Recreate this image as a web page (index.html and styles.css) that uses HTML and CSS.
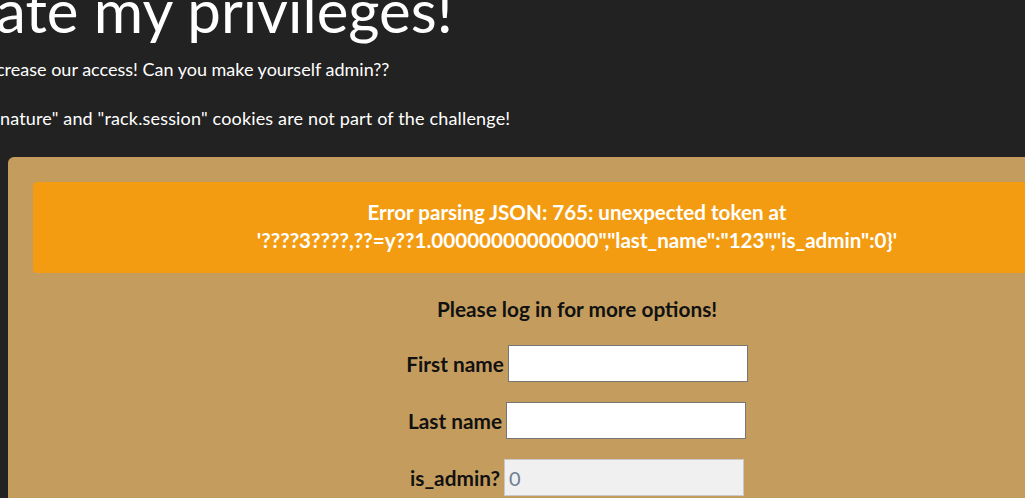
FILE: index.html
```html
<!DOCTYPE html>
<html lang="en">
<head>
<meta charset="utf-8">
<title>Escalate my privileges!</title>
<link rel="stylesheet" href="styles.css">
</head>
<body>
<div class="intro">
  <h1 class="title">ate my privileges!</h1>
  <p class="lead lead-one">crease our access! Can you make yourself admin??</p>
  <p class="lead lead-two">nature" and "rack.session" cookies are not part of the challenge!</p>
</div>
<div class="panel">
  <div class="alert">Error parsing JSON: 765: unexpected token at<br>'????3????,??=y??1.00000000000000","last_name":"123","is_admin":0}'</div>
  <p class="notice">Please log in for more options!</p>
  <form class="login">
    <div class="row"><label class="label" for="first">First name</label><input class="field" id="first" type="text"></div>
    <div class="row"><label class="label" for="last">Last name</label><input class="field" id="last" type="text"></div>
    <div class="row"><label class="label" for="admin">is_admin?</label><input class="field field-disabled" id="admin" type="text" value="0" disabled></div>
  </form>
</div>
</body>
</html>
```
FILE: styles.css
```css
html, body {
  margin: 0;
  padding: 0;
}
body {
  background: #222222;
  color: #ffffff;
  font-family: Lato, "Open Sans", sans-serif;
  overflow: hidden;
  height: 498px;
}
.intro {
  margin-top: -23px;
}
.title {
  font-weight: 400;
  font-size: 60px;
  line-height: 66px;
  margin: 0 0 13px -4px;
  white-space: nowrap;
}
.lead {
  font-size: 18px;
  line-height: 27px;
  margin: 0 0 22px 0;
  white-space: nowrap;
}
.lead-one {
  margin-left: -4px;
}
.lead-two {
  margin-bottom: 0;
  letter-spacing: 0.16px;
}
.panel {
  margin: 25px 0 0 8px;
  width: 1088px;
  padding: 25px;
  background: #c49d5e;
  border-radius: 6px;
  color: #111111;
}
.alert {
  background: #f39c12;
  color: #ffffff;
  border-radius: 4px;
  padding: 16px 15px 19px;
  font-size: 20.6px;
  line-height: 28px;
  font-weight: 700;
  text-align: center;
}
.notice {
  margin: 22px 0 22px;
  font-size: 20.8px;
  line-height: 28px;
  font-weight: 700;
  text-align: center;
}
.login {
  display: flex;
  flex-direction: column;
  gap: 20px;
}
.row {
  display: flex;
  justify-content: center;
  align-items: center;
  gap: 4px;
}
.label {
  font-size: 20.8px;
  line-height: 28px;
  font-weight: 700;
}
.field {
  box-sizing: border-box;
  width: 240px;
  height: 37px;
  border: 1px solid #767676;
  background: #ffffff;
  padding: 2px 4px;
  font-family: Lato, sans-serif;
  font-size: 20px;
  margin: 0;
}
.field-disabled {
  background: #f0f0f0;
  border-color: #c9c9c9;
  color: #6d7f90;
}
```
